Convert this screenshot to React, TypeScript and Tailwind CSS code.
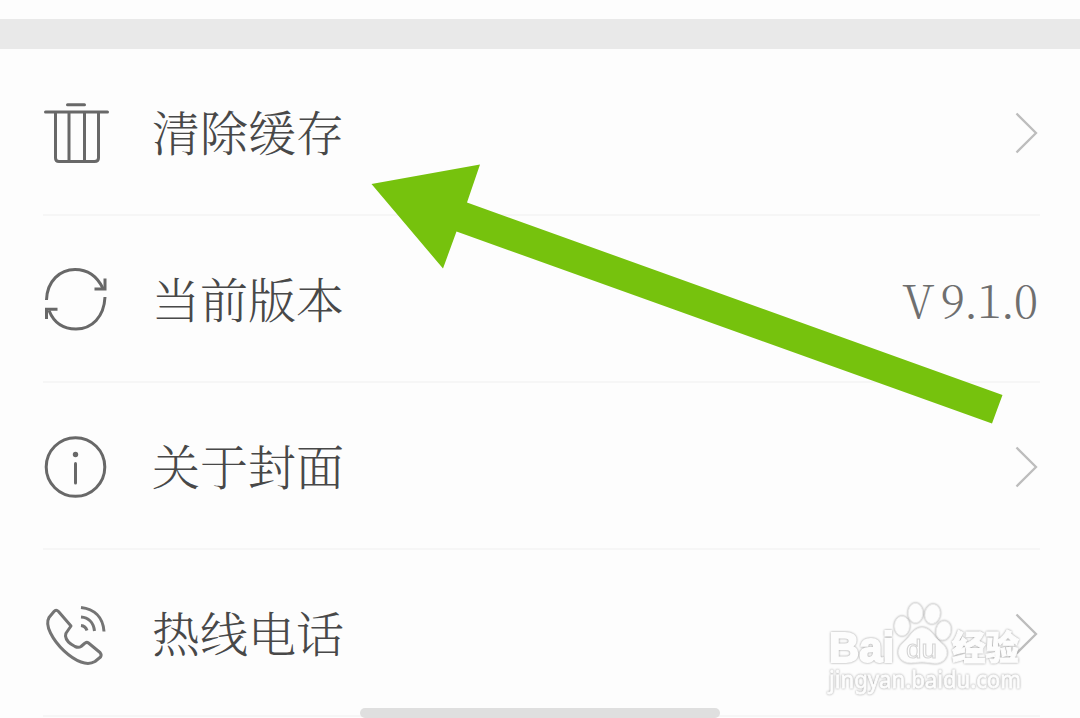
import React from 'react';

const TrashIcon = () => (
  <svg width="66" height="66" viewBox="0 0 66 66" fill="none" stroke="#686868" strokeWidth="3" strokeLinecap="round" strokeLinejoin="round">
    <path d="M24.500 4.800H41.500M2.500 12H64.500M12.500 12.500V58Q12.500 61.500 16 61.500H51.500Q55.500 61.500 55.500 58V12.500M26 12.500V61M41.500 12.500V61" />
  </svg>
);

const RefreshIcon = () => (
  <svg width="66" height="66" viewBox="0 0 66 66" fill="none" stroke="#686868" strokeWidth="3">
    <path d="M3.500 33C4 14 17 2.500 32 2.500C44 2.500 54 9 60 21.500" />
    <path d="M62 30C61 50 49 62 33 62C21 62 11 56 6 43.500" />
    <path d="M62 11.500V22H51.500M3.500 52V42.300H14.500" />
  </svg>
);

const InfoIcon = () => (
  <svg width="66" height="66" viewBox="0 0 66 66" fill="none" stroke="#686868" strokeWidth="3">
    <circle cx="32.500" cy="33" r="29.300" />
    <path d="M32.500 29.500V49" strokeLinecap="round" />
    <circle cx="32.500" cy="20.500" r="2.700" fill="#686868" stroke="none" />
  </svg>
);

const PhoneIcon = () => (
  <svg width="66" height="66" viewBox="0 0 66 66" fill="none" stroke="#747474" strokeWidth="3" strokeLinejoin="round">
    <path d="M11 10.500L6 16.500C4 20 4.500 26 7.500 32C14 45 27 57 38 61Q46 64 52 60.500L57.500 56Q59 54 57 51.500L45.500 42Q43.500 40.500 41.500 42.500L38 45.500Q35.500 47 32 45.500C27 43 23 39.500 22.500 35Q22.500 32 24.500 30L28 25L15.500 10.500Q13 8 11 10.500Z" />
    <path d="M38 6.500C51 8 60 16 61 30.500M38 16C45 16.500 50.500 21 51.500 30M38 24.500Q42.500 25 44 29.500" />
  </svg>
);

const Chevron = () => (
  <svg width="26" height="44" viewBox="0 0 26 44" fill="none" stroke="#bdbdbd" strokeWidth="2.300">
    <path d="M2.500 2.500L22 22L2.500 41.500" />
  </svg>
);

const rows = [
  { label: '清除缓存', icon: <TrashIcon /> },
  { label: '当前版本', icon: <RefreshIcon />, value: 'V 9.1.0' },
  { label: '关于封面', icon: <InfoIcon /> },
  { label: '热线电话', icon: <PhoneIcon /> },
];

const Watermark = () => (
  <svg
    className="absolute top-[596px] left-[820px] drop-shadow-[0_0_0.8px_#9c9c9c]"
    width="210"
    height="104"
    viewBox="0 0 210 104"
    fill="#fdfdfd"
    stroke="#fdfdfd"
    strokeWidth="1"
  >
    <text x="9" y="66" fontSize="43" fontWeight="700" fontFamily="'Liberation Sans', sans-serif" strokeWidth="2" textLength="65" lengthAdjust="spacingAndGlyphs">Bai</text>
    <g stroke="#ececec">
      <ellipse cx="82" cy="30" rx="7.500" ry="9.800" />
      <ellipse cx="95.500" cy="17" rx="7.300" ry="9.800" />
      <ellipse cx="112.500" cy="18" rx="7.500" ry="9.700" transform="rotate(12 112.500 18)" />
      <ellipse cx="123.500" cy="34.500" rx="7.300" ry="9.500" transform="rotate(12 123.500 34.500)" />
      <path d="M102 31.500C93 32 90 41 84 46C77 51 77 60 82 64C88 69 95 66 102 66C110 66 118 70 124 64C130 57 126 50 120 46C114 41 111 32 102 31.500Z" />
    </g>
    <text x="86" y="62" fontSize="26" fontFamily="'Liberation Sans', sans-serif" stroke="#d4d4d4" textLength="31" lengthAdjust="spacingAndGlyphs">du</text>
    <text x="132" y="64" fontSize="34" fontWeight="900" fontFamily="'Noto Sans CJK SC', sans-serif" textLength="67" lengthAdjust="spacingAndGlyphs">经验</text>
    <text x="9" y="92" fontSize="23" fontFamily="'Noto Sans', sans-serif" strokeWidth="0.800" textLength="192" lengthAdjust="spacingAndGlyphs">jingyan.baidu.com</text>
  </svg>
);

export default function App() {
  return (
    <div className="relative h-[718px] w-[1080px] overflow-hidden bg-[#fdfdfd] font-['Noto_Serif_CJK_SC','Noto_Sans_CJK_SC',serif]">
      <div className="h-[19px]" />
      <div className="h-[30px] bg-[#e9e9e9]" />

      <div className="flex flex-col pr-10 pl-[43px]">
        {rows.map((row) => (
          <div key={row.label} className="flex h-[167px] items-center border-b-2 border-[#f6f6f6] pt-0.5">
            {row.icon}
            <span className="mb-[3px] ml-[43px] text-[48px] leading-none font-light text-[#484848]">{row.label}</span>
            <div className="ml-auto">
              {row.value ? (
                <span className="mr-[3px] text-[45px] leading-none font-light tracking-[-1.2px] text-[#6f6f6f] [word-spacing:-3px]">
                  {row.value}
                </span>
              ) : (
                <Chevron />
              )}
            </div>
          </div>
        ))}
      </div>

      <Watermark />

      <svg className="absolute top-0 left-0" width="1080" height="718" viewBox="0 0 1080 718">
        <path d="M371.500 184L480 164.500L467 202.500L1002.500 395L992 423.500L456.500 231.500L443 268.500Z" fill="#76c20d" />
      </svg>

      <div className="absolute top-[708px] left-[360px] h-2.5 w-[360px] rounded-full bg-[#dfdfdf]" />
    </div>
  );
}
